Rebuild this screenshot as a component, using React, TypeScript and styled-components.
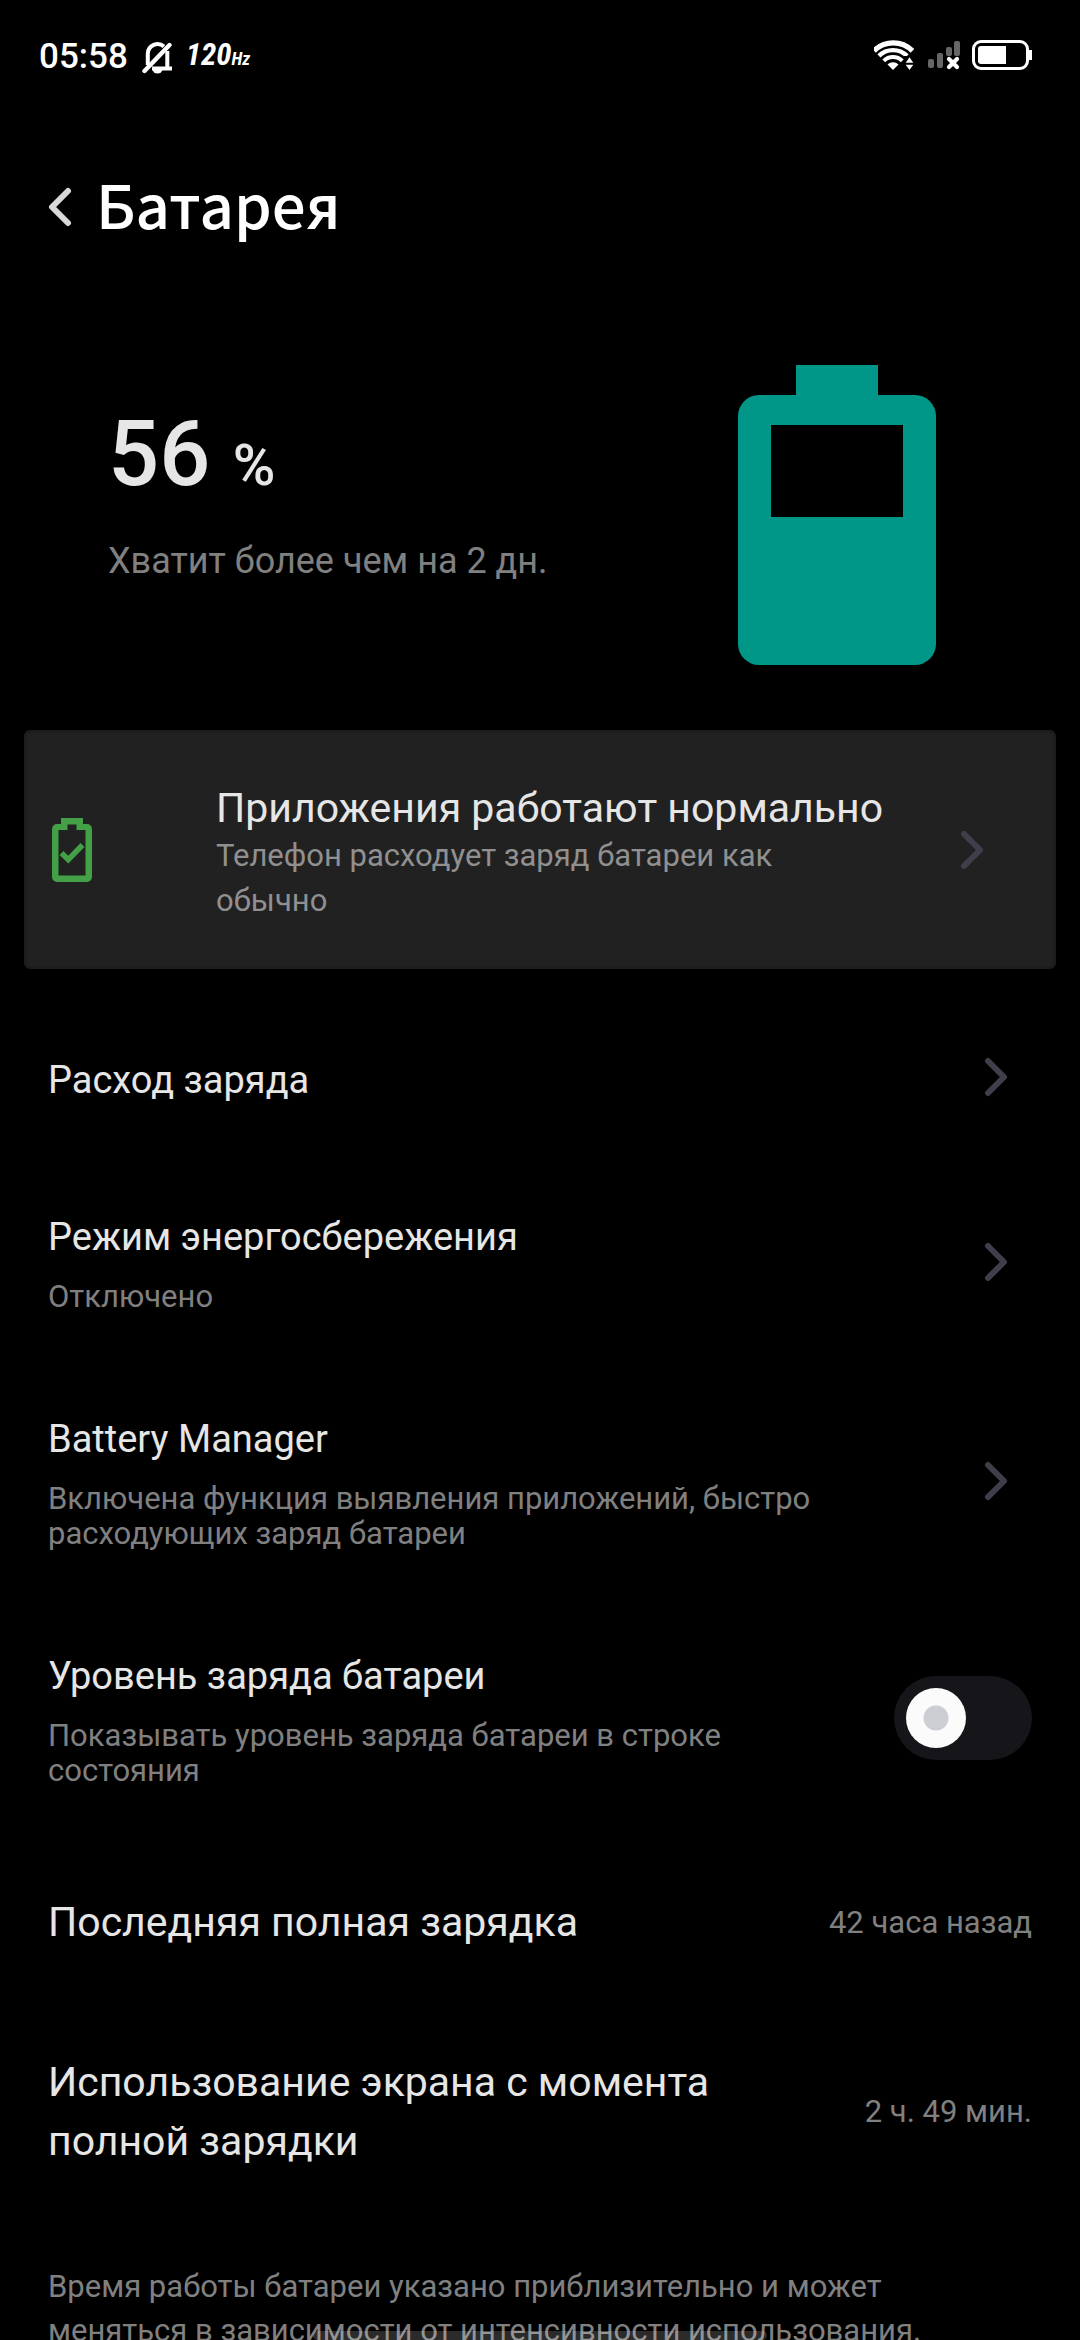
import React, { useState } from "react";
import styled, { createGlobalStyle } from "styled-components";

const GlobalStyle = createGlobalStyle`
  * { box-sizing: border-box; }
  html, body { margin: 0; background: #000; }
  body { font-family: Roboto, "Noto Sans", sans-serif; color: #e6e6e6; }
  button { font: inherit; color: inherit; background: none; border: 0; padding: 0; text-align: left; cursor: pointer; }
  h1, p { margin: 0; font-weight: 400; }
  svg { display: block; flex: none; }
`;

const Screen = styled.div`
  height: 100vh;
  overflow: hidden;
  background: #000;
`;

const StatusBar = styled.header`
  display: flex;
  align-items: center;
  justify-content: space-between;
  height: 114px;
  padding: 0 48px 0 39px;
  color: #fff;
`;

const StatusText = styled.div`
  display: flex;
  align-items: center;
  gap: 14px;
`;

const StatusIcons = styled.div`
  display: flex;
  align-items: center;
  gap: 12px;
  padding-bottom: 4px;
`;

const Clock = styled.time`
  font-size: 35px;
  font-weight: 500;
  line-height: 42px;
`;

const RefreshRate = styled.span`
  font-family: "Liberation Sans Narrow", "Roboto Condensed", Roboto, sans-serif;
  font-size: 31px;
  font-style: italic;
  font-weight: 700;
  line-height: 42px;
  small { font-size: 18px; }
`;

const TitleBar = styled.div`
  display: flex;
  align-items: center;
  gap: 24px;
  height: 186px;
  padding: 0 48px;
`;

const BackButton = styled.button`
  display: flex;
`;

const PageTitle = styled.h1`
  font-family: "Noto Sans CJK SC", "Noto Sans", sans-serif;
  && { font-weight: 500; padding-bottom: 9px; }
  font-size: 60px;
  line-height: 84px;
  color: #fff;
`;

const Summary = styled.section`
  display: flex;
  align-items: center;
  justify-content: space-between;
  height: 430px;
  padding: 0 144px 0 108px;
`;

const SummaryText = styled.div`
  display: flex;
  flex-direction: column;
  gap: 22px;
  padding-bottom: 46px;
`;

const Level = styled.p`
  && { font-weight: 500; }
  font-size: 90px;
  line-height: 106px;
  small { font-size: 58px; }
`;

const Estimate = styled.p`
  font-size: 36px;
  line-height: 42px;
  color: #808080;
`;

const StatusCard = styled.button`
  display: flex;
  align-items: center;
  width: calc(100% - 48px);
  min-height: 239px;
  margin: 0 24px;
  && {
    padding: 0 69px 0 21px;
    background: #212121;
    border: 3px solid #1d1d1d;
  }
  border-radius: 6px;
`;

const CardText = styled.span`
  display: flex;
  flex: 1;
  flex-direction: column;
  padding: 7px 40px 0 120px;
`;

const CardTitle = styled.span`
  font-size: 41px;
  line-height: 50px;
`;

const CardNote = styled.span`
  max-width: 640px;
  font-size: 31px;
  line-height: 45px;
  color: #909090;
`;

const List = styled.main`
  padding: 27px 48px 0;
`;

const Row = styled.button`
  display: flex;
  align-items: center;
  justify-content: space-between;
  width: 100%;
  min-height: 167px;
  && { padding: 46px 24px 51px 0; }
`;

const ToggleRow = styled.label`
  display: flex;
  align-items: center;
  justify-content: space-between;
  padding: 46px 0 51px;
`;

const RowText = styled.span`
  display: flex;
  flex-direction: column;
  gap: 19px;
  max-width: 800px;
  padding-top: 6px;
`;

const RowTitle = styled.span`
  font-size: 38px;
  line-height: 45px;
`;

const RowNote = styled.span`
  font-size: 31px;
  line-height: 35px;
  color: #808080;
`;

const Toggle = styled.input`
  appearance: none;
  flex: none;
  display: flex;
  align-items: center;
  width: 138px;
  height: 84px;
  margin: 0;
  padding: 0 12px;
  border-radius: 42px;
  background: #16151a;
  cursor: pointer;
  &::before {
    content: "";
    width: 60px;
    height: 60px;
    border-radius: 50%;
    background: radial-gradient(circle, #cdced4 0 12px, #fbfbfc 13px);
  }
  &:checked {
    justify-content: flex-end;
    background: #009688;
  }
`;

const InfoRow = styled.div`
  display: flex;
  align-items: center;
  justify-content: space-between;
  gap: 120px;
  padding: 54px 0 47px;
`;

const InfoTitle = styled.span`
  font-size: 41px;
  line-height: 59px;
`;

const InfoValue = styled.span`
  flex: none;
  font-size: 31px;
  line-height: 44px;
  color: #808080;
`;

const Footnote = styled.p`
  padding: 47px 48px 0 0;
  font-size: 31px;
  line-height: 44px;
  color: #808080;
`;

const HomeIndicator = styled.div`
  position: fixed;
  bottom: 0;
  left: 50%;
  width: 454px;
  height: 9px;
  margin-left: -227px;
  border-radius: 5px;
  background: rgba(255, 255, 255, 0.17);
`;

const Chevron = () => (
  <svg width="24" height="42" viewBox="0 0 24 42" fill="none" stroke="#3f3e4b" strokeWidth="6" strokeLinecap="round" strokeLinejoin="round">
    <path d="M4 5l16 16L4 37" />
  </svg>
);

const BellOff = () => (
  <svg width="30" height="34" viewBox="0 0 30 34" fill="none" stroke="#fff">
    <path d="M5.800 25V13.500A9.800 9.800 0 0 1 22 6.500M25.300 11V28.500M10 28.500H30" strokeWidth="4" />
    <path d="M2.500 31L27.500 5" strokeWidth="4.400" strokeLinecap="round" />
    <path d="M10.500 29h10a5 4.500 0 0 1-10 0z" fill="#fff" stroke="none" />
  </svg>
);

const Wifi = () => (
  <svg width="40" height="30" viewBox="0 0 40 30" fill="none" stroke="#fff">
    <path d="M0 10.800A27.200 27.200 0 0 1 38.400 10.800" strokeWidth="5.200" />
    <path d="M4.900 15.900A20 20 0 0 1 33.100 15.900" strokeWidth="4.400" />
    <path d="M9.800 20.800A13 13 0 0 1 28.200 20.800" strokeWidth="4" />
    <path d="M19 30l-5.500-5.500a7.700 7.700 0 0 1 11 0z" fill="#fff" stroke="none" />
    <path d="M30 16h10v14h-10z" fill="#000" stroke="none" />
    <path d="M35.500 17.300l3.800 5.400h-7.600zM35.500 30l3.800-5.300h-7.600z" fill="#fff" stroke="none" />
  </svg>
);

const Signal = () => (
  <svg width="34" height="30" viewBox="0 0 34 30">
    <g fill="#666">
      <rect x="2" y="19" width="6" height="9" rx="2" />
      <rect x="11" y="13" width="6" height="15" rx="2" />
      <rect x="20" y="7" width="6" height="9" rx="2" />
      <rect x="28" y="1" width="6" height="15" rx="2" />
    </g>
    <path d="M23 19l8 8M31 19l-8 8" stroke="#fff" strokeWidth="4.200" strokeLinecap="round" />
  </svg>
);

const StatusBattery = () => (
  <svg width="60" height="30" viewBox="0 0 60 30">
    <rect x="1.500" y="1.500" width="54" height="27" rx="7.500" fill="none" stroke="#fff" strokeWidth="3" />
    <path d="M6 9a3 3 0 0 1 3-3H34V24H9a3 3 0 0 1-3-3z" fill="#fff" />
    <path d="M57 10h3v10h-3z" fill="#fff" />
  </svg>
);

const BatteryLarge = () => (
  <svg width="198" height="300" viewBox="0 0 198 300" fill="#009688">
    <path fillRule="evenodd" d="M58 0H140V30H177a21 21 0 0 1 21 21V279a21 21 0 0 1-21 21H21a21 21 0 0 1-21-21V51a21 21 0 0 1 21-21H58zM33 60V152H165V60z" />
  </svg>
);

const BatteryOk = () => (
  <svg width="48" height="66" viewBox="0 0 48 66" fill="#43a047">
    <path fillRule="evenodd" d="M13 1H35V7H39a5 5 0 0 1 5 5V60a5 5 0 0 1-5 5H9a5 5 0 0 1-5-5V12a5 5 0 0 1 5-5H13zM19.500 7.500V13H10.500V58.500H37.500V13H28.500V7.500z" />
    <path d="M13.500 36L20.300 42.700L34.500 28" fill="none" stroke="#43a047" strokeWidth="5.500" />
  </svg>
);

const links = [
  { title: "Расход заряда" },
  { title: "Режим энергосбережения", note: "Отключено" },
  { title: "Battery Manager", note: "Включена функция выявления приложений, быстро расходующих заряд батареи" },
];

const facts = [
  { title: "Последняя полная зарядка", value: "42 часа назад" },
  { title: "Использование экрана с момента полной зарядки", value: "2 ч. 49 мин." },
];

export default function App() {
  const [showLevel, setShowLevel] = useState(false);
  return (
    <Screen lang="ru">
      <GlobalStyle />
      <StatusBar>
        <StatusText>
          <Clock>05:58</Clock>
          <BellOff />
          <RefreshRate>120<small>Hz</small></RefreshRate>
        </StatusText>
        <StatusIcons>
          <Wifi />
          <Signal />
          <StatusBattery />
        </StatusIcons>
      </StatusBar>
      <TitleBar>
        <BackButton aria-label="Назад">
          <svg width="24" height="42" viewBox="0 0 24 42" fill="none" stroke="#d9d9d9" strokeWidth="6" strokeLinecap="round" strokeLinejoin="round">
            <path d="M20 5L4 21l16 16" />
          </svg>
        </BackButton>
        <PageTitle>Батарея</PageTitle>
      </TitleBar>
      <Summary>
        <SummaryText>
          <Level>56 <small>%</small></Level>
          <Estimate>Хватит более чем на 2 дн.</Estimate>
        </SummaryText>
        <BatteryLarge />
      </Summary>
      <StatusCard>
        <BatteryOk />
        <CardText>
          <CardTitle>Приложения работают нормально</CardTitle>
          <CardNote>Телефон расходует заряд батареи как обычно</CardNote>
        </CardText>
        <Chevron />
      </StatusCard>
      <List>
        {links.map((item) => (
          <Row key={item.title}>
            <RowText>
              <RowTitle>{item.title}</RowTitle>
              {item.note && <RowNote>{item.note}</RowNote>}
            </RowText>
            <Chevron />
          </Row>
        ))}
        <ToggleRow>
          <RowText>
            <RowTitle>Уровень заряда батареи</RowTitle>
            <RowNote>Показывать уровень заряда батареи в строке состояния</RowNote>
          </RowText>
          <Toggle type="checkbox" role="switch" checked={showLevel} onChange={(e) => setShowLevel(e.target.checked)} />
        </ToggleRow>
        {facts.map((fact) => (
          <InfoRow key={fact.title}>
            <InfoTitle>{fact.title}</InfoTitle>
            <InfoValue>{fact.value}</InfoValue>
          </InfoRow>
        ))}
        <Footnote>Время работы батареи указано приблизительно и может меняться в зависимости от интенсивности использования.</Footnote>
      </List>
      <HomeIndicator />
    </Screen>
  );
}
